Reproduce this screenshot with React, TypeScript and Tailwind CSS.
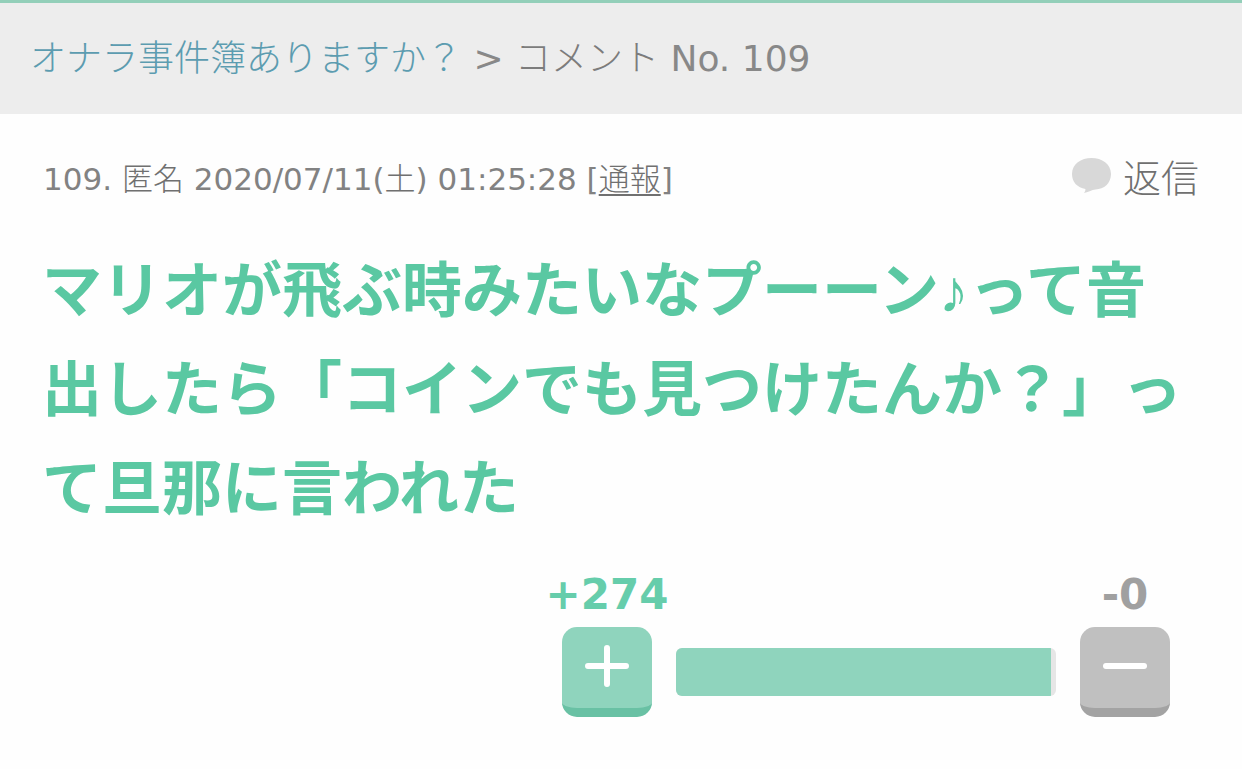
const comment = {
  no: 109,
  name: "匿名",
  date: "2020/07/11",
  day: "土",
  time: "01:25:28",
  body: "マリオが飛ぶ時みたいなプーーン♪って音出したら「コインでも見つけたんか？」って旦那に言われた",
  plus: 274,
  minus: 0,
};

function Breadcrumb() {
  return (
    <nav className="border-t-3 border-[#93cfb9] bg-[#ededed] px-[30px] py-[30px] text-[36px] leading-[51px] text-[#888888]">
      <a href="#topic" className="font-light text-[#5c9cb0]">
        オナラ事件簿ありますか？
      </a>
      {" > "}
      <span className="font-light text-[#7c7c7c]">コメント</span> No.{" "}
      {comment.no}
    </nav>
  );
}

function CommentMeta() {
  return (
    <div className="flex items-center justify-between px-px text-[#828282]">
      <p className="text-[31px] leading-[54px]">
        {comment.no}.{" "}
        <span className="font-light text-[#707070]">{comment.name}</span>{" "}
        {comment.date}(
        <span className="font-light text-[#707070]">{comment.day}</span>){" "}
        {comment.time} [
        <a
          href="#report"
          className="font-light text-[#707070] underline decoration-2 underline-offset-4"
        >
          通報
        </a>
        ]
      </p>
      <button
        type="button"
        className="flex items-center gap-3 text-[38px] leading-[54px] font-light text-[#707070]"
      >
        <svg
          viewBox="0 0 39 35"
          className="mb-2 h-[35px] w-[39px] fill-[#d8d8d8]"
          aria-hidden="true"
        >
          <path d="M19.500 0C30 0 39 6 39 16c0 9.500-7 15-15.500 15.500-4 .6-6 2-11.500 3.500 1-1.200 1.600-2.500 1.400-4C5.500 29.500 0 24.500 0 16 0 6 9 0 19.500 0z" />
        </svg>
        返信
      </button>
    </div>
  );
}

function Votes() {
  const total = comment.plus + comment.minus;
  // the bar always keeps a small grey end
  const rate = Math.min((comment.plus / total) * 100, 98.7);
  return (
    <div className="flex items-end justify-end gap-6 pr-[30px] text-[42px] leading-[48px] font-bold">
      <div className="w-[90px]">
        <div className="mb-2 flex justify-center whitespace-nowrap text-[#66cdab]">
          +{comment.plus}
        </div>
        <button
          type="button"
          aria-label="プラス"
          className="flex h-[90px] w-full justify-center rounded-[15px] border-b-9 border-[#69c1a4] bg-[#8fd4bd] pt-[17px]"
        >
          <svg
            viewBox="0 0 44 44"
            className="h-[44px] w-[44px] stroke-white"
            strokeWidth="6"
            strokeLinecap="round"
            aria-hidden="true"
          >
            <path d="M3 22h38M22 4v36" />
          </svg>
        </button>
      </div>
      <div className="mb-[21px] h-12 w-[380px] overflow-hidden rounded-md bg-[#e6e6e6]">
        <div className="h-full bg-[#8fd4bd]" style={{ width: `${rate}%` }} />
      </div>
      <div className="w-[90px]">
        <div className="mb-2 flex justify-center whitespace-nowrap text-[#a0a0a0]">
          -{comment.minus}
        </div>
        <button
          type="button"
          aria-label="マイナス"
          className="flex h-[90px] w-full justify-center rounded-[15px] border-b-9 border-[#a3a3a3] bg-[#c0c0c0] pt-[17px]"
        >
          <svg
            viewBox="0 0 44 44"
            className="h-[44px] w-[44px] stroke-white"
            strokeWidth="6"
            strokeLinecap="round"
            aria-hidden="true"
          >
            <path d="M3 22h38" />
          </svg>
        </button>
      </div>
    </div>
  );
}

export default function App() {
  return (
    <div className="min-h-screen bg-[#fefefe] font-['DejaVu_Sans','Noto_Sans_CJK_JP',sans-serif]">
      <Breadcrumb />
      <main className="px-[42px] pt-[38px]">
        <CommentMeta />
        <p className="mt-9 mb-8 font-['Liberation_Sans','Noto_Sans_CJK_JP',sans-serif] text-[60px] leading-[99px] font-bold text-[#5ac8a2]">
          {comment.body}
        </p>
        <Votes />
      </main>
    </div>
  );
}
